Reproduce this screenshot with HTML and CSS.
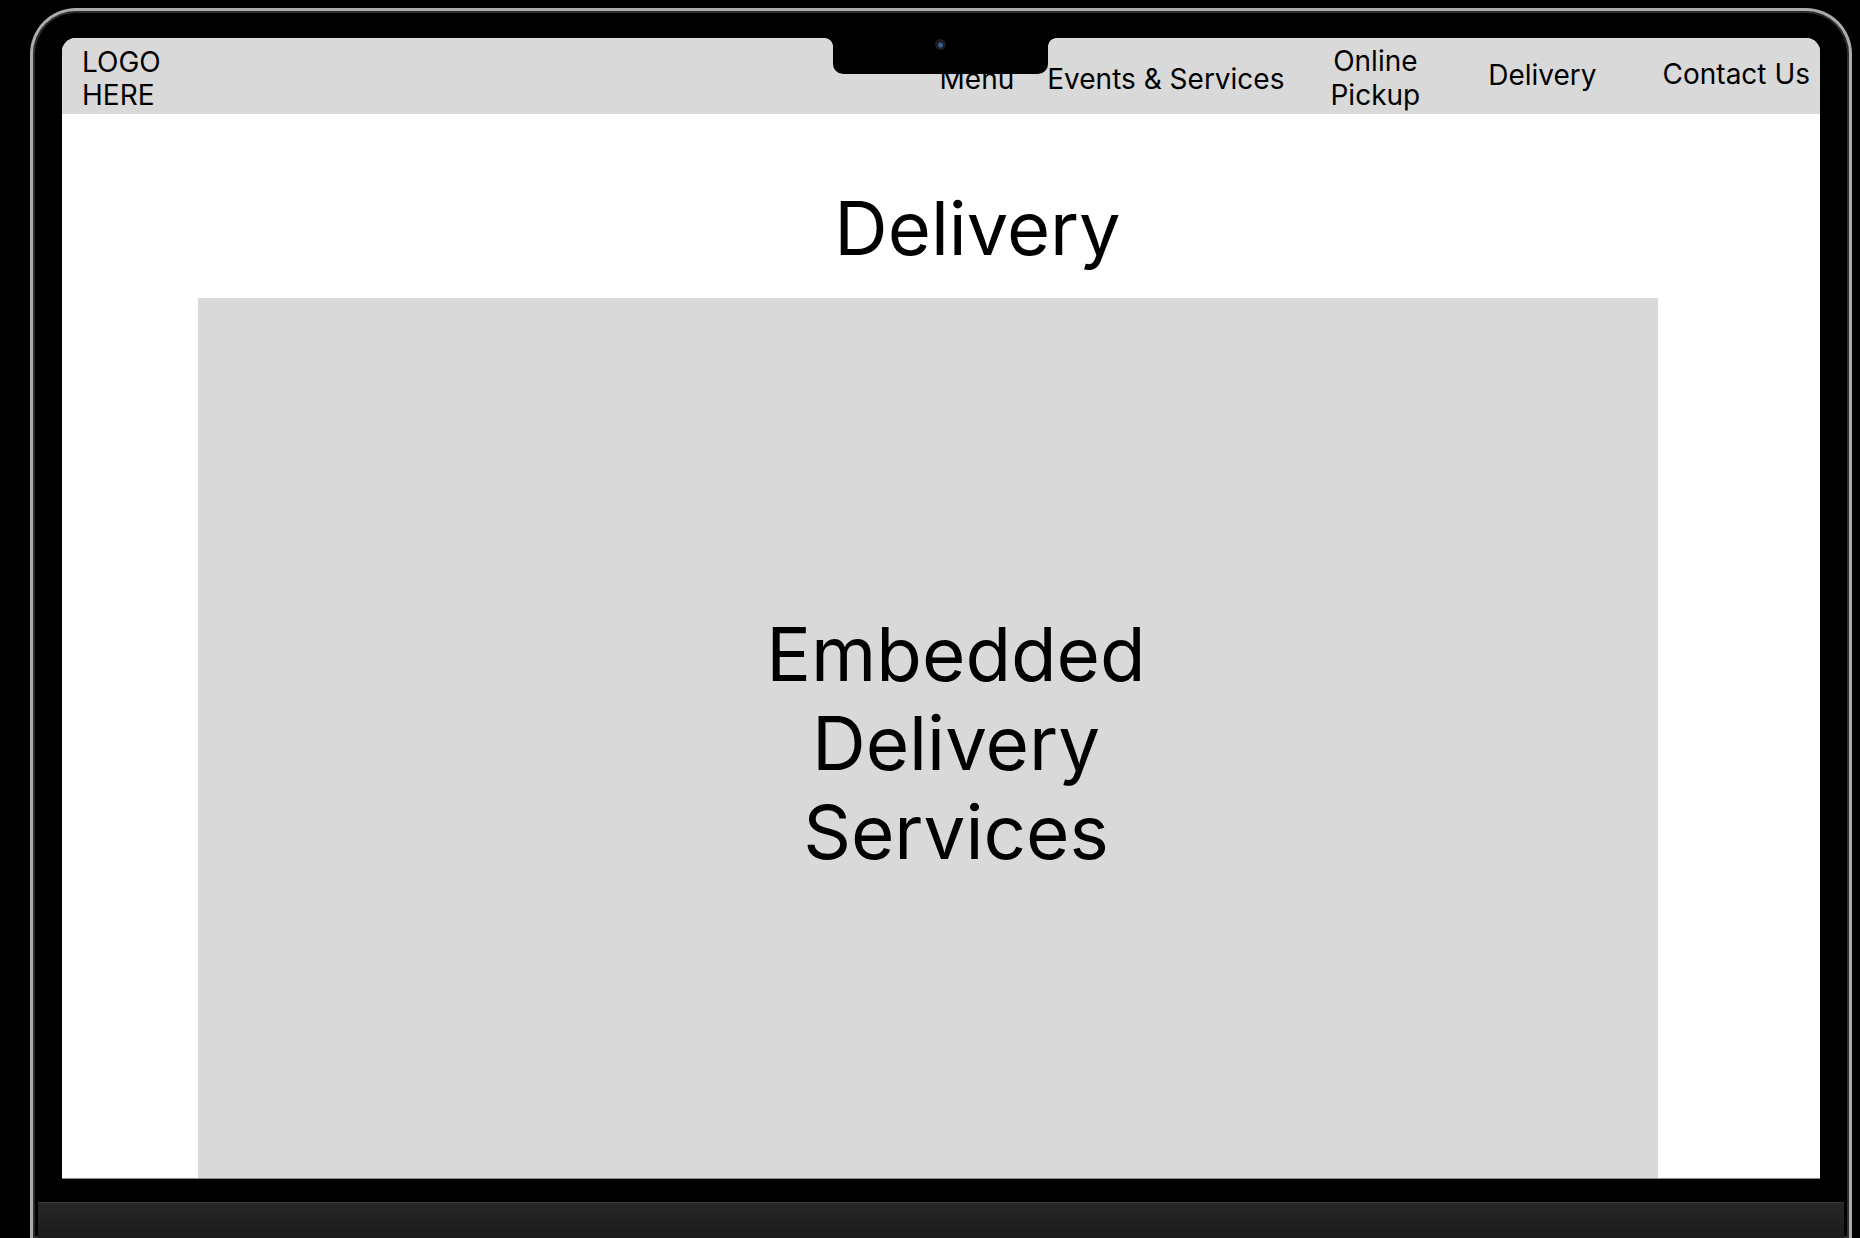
FILE: index.html
```html
<!DOCTYPE html>
<html lang="en">

<head>
    <meta charset="UTF-8">
    <title>Delivery</title>
    <link rel="stylesheet" href="styles.css">
</head>

<body>
    <div class="laptop">
        <div class="screen">
            <div class="notch"><span class="camera"></span></div>

            <header class="topbar">
                <div class="logo">LOGO<br>HERE</div>
                <nav class="nav">
                    <a href="#" class="nav-low">Menu</a>
                    <a href="#" class="nav-low nav-events">Events &amp; Services</a>
                    <a href="#" class="nav-pickup">Online<br>Pickup</a>
                    <a href="#" class="nav-delivery">Delivery</a>
                    <a href="#" class="nav-contact">Contact Us</a>
                </nav>
            </header>

            <h1 class="page-title">Delivery</h1>

            <div class="embed-box">
                <p>Embedded<br>Delivery<br>Services</p>
            </div>
        </div>
        <div class="base"></div>
    </div>
</body>

</html>
```

FILE: styles.css
```css
* {
    box-sizing: border-box;
}

body {
    margin: 0;
    padding: 8px 0 0 30px;
    height: 1238px;
    overflow: hidden;
    background: #000;
    font-family: Inter, "Noto Sans", sans-serif;
    color: #000;
}

/* device frame */
.laptop {
    display: flex;
    flex-direction: column;
    width: 1822px;
    height: 1230px;
    padding: 27px 29px 0 29px;
    background: #000;
    border: 3px solid #ababab;
    border-bottom: none;
    border-radius: 46px 46px 0 0;
    box-shadow: inset 0 0 0 2px #2d2d2d;
}

.screen {
    position: relative;
    height: 1141px;
    flex-shrink: 0;
    background: #fff;
    border-radius: 14px 14px 0 0;
    border-bottom: 1px solid #8c8c8c;
    overflow: hidden;
}

.base {
    flex: 1;
    margin: 23px -24px 0 -24px;
    background: linear-gradient(#272727, #1b1b1b);
    border-top: 1px solid #3b3b3b;
}

.notch {
    position: absolute;
    top: 0;
    left: 771px;
    width: 215px;
    height: 36px;
    background: #000;
    border-radius: 0 0 10px 10px;
    z-index: 2;
}

.notch::before,
.notch::after {
    content: "";
    position: absolute;
    top: 0;
    width: 8px;
    height: 8px;
}

.notch::before {
    left: -8px;
    background: radial-gradient(circle at 0 100%, transparent 7.5px, #000 8px);
}

.notch::after {
    right: -8px;
    background: radial-gradient(circle at 100% 100%, transparent 7.5px, #000 8px);
}

.camera {
    position: absolute;
    left: 102px;
    top: 1px;
    width: 11px;
    height: 11px;
    border-radius: 50%;
    background: radial-gradient(circle at 50% 55%, #35608a 0 2px, #1a1d25 3px);
}

/* page content */
.topbar {
    display: flex;
    align-items: center;
    justify-content: space-between;
    height: 76px;
    padding: 0 10px 0 20px;
    background: #d9d9d9;
}

.logo {
    font-size: 28px;
    line-height: 33px;
    padding-top: 6px;
}

.nav {
    display: flex;
    align-items: center;
}

.nav a {
    color: #000;
    text-decoration: none;
    font-size: 28px;
    line-height: 34px;
    text-align: center;
}

.nav-low {
    padding-top: 6px;
}

.nav-events {
    margin-left: 33px;
}

.nav-pickup {
    margin-left: 46px;
    padding-top: 4px;
}

.nav-delivery {
    margin-left: 68px;
    padding-bottom: 2px;
}

.nav-contact {
    margin-left: 66px;
    padding-bottom: 5px;
}

.page-title {
    margin: 69px 0 25px 0;
    padding-left: 73px;
    text-align: center;
    font-size: 74px;
    font-weight: 400;
    line-height: 90px;
}

.embed-box {
    display: flex;
    align-items: center;
    justify-content: center;
    width: 1460px;
    height: 891px;
    margin-left: 136px;
    padding-left: 56px;
    background: #d9d9d9;
}

.embed-box p {
    margin: 0;
    font-size: 74.5px;
    line-height: 89px;
    text-align: center;
}
```
